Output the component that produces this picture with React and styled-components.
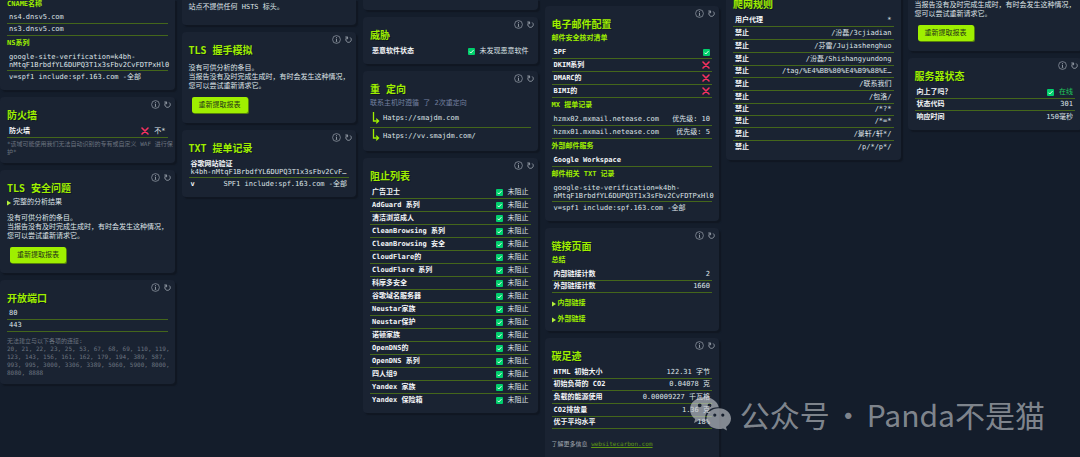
import React from "react";
import styled, { createGlobalStyle, css } from "styled-components";

const color = {
  page: "#141d2b",
  card: "#1a2332",
  shadow: "#101722",
  accent: "#9fef00",
  rule: "#44661b",
  text: "#dfe3e8",
  strong: "#f4f6f8",
  muted: "#6c7480",
  subtle: "#7480a0",
};

const GlobalStyle = createGlobalStyle`
  *, *::before, *::after { box-sizing: border-box; }
  body {
    margin: 0;
    background: ${color.page};
    color: ${color.text};
    font-family: "DejaVu Sans Mono", "Noto Sans CJK SC", monospace;
    font-size: 7px;
    line-height: 9px;
  }
  h2, h3, p, ul { margin: 0; padding: 0; }
  ul { list-style: none; }
`;

const Page = styled.main`
  position: relative;
  height: 100vh;
  overflow: hidden;
`;

const Board = styled.div`
  display: grid;
  grid-template-columns: repeat(6, minmax(0, 1fr));
  gap: 7px;
  align-items: start;
  margin-right: -2px;
`;

const Column = styled.div`
  display: flex;
  flex-direction: column;
  gap: 7px;
`;

const CardBox = styled.section`
  padding: 0 7px 7px;
  border-radius: 4px;
  background: ${color.card};
  box-shadow: 2px 2px 1px ${color.shadow};
  white-space: nowrap;
`;

const ScrolledCard = styled(CardBox)`
  margin-top: ${(p) => p.$shift || -1}px;
  padding: ${(p) => p.$pad || "0 7px 7px"};
  border-radius: 0 0 4px 4px;
`;

const Actions = styled.div`
  display: flex;
  justify-content: flex-end;
  gap: 3px;
  height: 11px;
  padding-top: 3px;
  margin-right: -4px;
`;

const IconButton = styled.button`
  display: flex;
  width: 9px;
  height: 9px;
  padding: 0;
  border: 0;
  background: none;
  color: #9aa1ac;
  cursor: pointer;
`;

const Title = styled.h2`
  height: 14px;
  font-size: 10px;
  font-weight: 700;
  line-height: 16px;
  color: ${color.accent};
  text-shadow: 1px 1px 0 ${color.shadow};
`;

const Subtitle = styled.h3`
  margin: 2px 0;
  font-size: 7px;
  font-weight: 700;
  line-height: 11px;
  color: ${color.accent};

  ${ScrolledCard} > &:first-child { margin-top: 0; }
`;

const List = styled.ul`
  ${Title} + & { margin-top: 3px; }
`;

const Row = styled.li`
  display: flex;
  justify-content: space-between;
  padding: 0 2px;
  line-height: ${(p) => (p.$tight ? "11px" : "12px")};
  border-bottom: 1px solid ${color.rule};

  ${List}:last-child > &:last-child {
    line-height: 12px;
    border-bottom: 0;
  }

  ${(p) =>
    p.$stacked &&
    css`
      flex-direction: column;
      padding: 2px 2px 1px;
      line-height: 8px;
    `}
`;

const Label = styled.span`
  font-weight: 700;
  color: ${color.strong};
`;

const Value = styled.span`
  display: flex;
  align-items: center;
  gap: 5px;
  color: ${(p) => (p.$online ? "#20c85c" : color.text)};
`;

const Paragraph = styled.p`
  margin-top: ${(p) => (p.$flush ? "0" : "7px")};
`;

const Hint = styled.p`
  margin: 2px 0 1px;
  line-height: 11px;
  color: ${color.subtle};
`;

const Note = styled.p`
  margin-top: ${(p) => p.$gap}px;
  font-size: 6px;
  line-height: 8px;
  color: ${color.muted};
`;

const Footnote = styled(Note)`
  margin-bottom: 7px;
  color: #a2a8b1;

  a { color: #5f9812; }
`;

const ReportButton = styled.button`
  display: block;
  width: 56px;
  height: 16px;
  margin: 6px 3px 3px;
  padding: 0;
  border: 0;
  border-radius: 2px;
  background: ${color.accent};
  box-shadow: 1px 1px 0 #56800c;
  color: #26351a;
  font: inherit;
  cursor: pointer;
`;

const Summary = styled.summary`
  display: flex;
  align-items: center;
  gap: 2px;
  list-style: none;
  cursor: pointer;
  color: ${(p) => (p.$accent ? color.accent : color.text)};
  font-weight: ${(p) => (p.$accent ? 700 : 400)};
`;

const Disclosure = styled.details`
  margin-top: 3px;
`;

const DisclosureGroup = styled.div`
  display: flex;
  flex-direction: column;
  gap: 7px;
  margin-top: 6px;

  ${Disclosure} { margin-top: 0; }
`;

const RedirectRow = styled.li`
  display: flex;
  align-items: center;
  gap: 3px;
  height: 17px;
  padding-left: 2px;

  & + & { border-top: 1px solid ${color.rule}; }
`;

const Watermark = styled.div`
  position: absolute;
  right: 35px;
  bottom: 21px;
  display: flex;
  align-items: center;
  color: rgba(200, 203, 208, 0.62);
  font-family: "Noto Sans CJK SC", sans-serif;
  font-size: 30px;
  line-height: 44px;
  white-space: nowrap;
`;

const WatermarkDot = styled.span`
  width: 37px;
  text-align: center;
`;

const WatermarkLogo = styled.svg`
  width: 44px;
  height: 36px;
  margin-right: 7px;
`;

function InfoIcon() {
  return (
    <svg width="9" height="9" viewBox="0 0 9 9" fill="none" stroke="currentColor">
      <circle cx="4.5" cy="4.5" r="3.9" strokeWidth="0.7" />
      <path d="M4.5 3.8v2.9" strokeWidth="0.9" />
      <path d="M3.700 3.900h.8M3.500 6.700h2" strokeWidth="0.4" />
      <circle cx="4.5" cy="2.4" r="0.5" fill="currentColor" stroke="none" />
    </svg>
  );
}

function RefreshIcon() {
  return (
    <svg width="9" height="9" viewBox="0 0 9 9" fill="none" stroke="currentColor">
      <path d="M3.400 2.200A2.700 2.700 0 1 0 6.200 2.500" strokeWidth="0.9" />
      <path d="M1.300 2h2.300v2.200" strokeWidth="0.9" />
    </svg>
  );
}

function CheckMark() {
  return (
    <svg width="7" height="7" viewBox="0 0 7 7" role="img" aria-label="是">
      <rect width="7" height="7" rx="1" fill="#00cf6c" />
      <path d="M1.5 3.7 2.8 5 5.5 2.1" fill="none" stroke="#fff" strokeWidth="0.9" />
    </svg>
  );
}

function CrossMark() {
  return (
    <svg width="8" height="8" viewBox="0 0 8 8" role="img" aria-label="否">
      <path d="M1 1 7 7M7 1 1 7" stroke="#f8315f" strokeWidth="1.6" strokeLinecap="round" />
    </svg>
  );
}

function Triangle() {
  return (
    <svg width="4" height="6" viewBox="0 0 4 6">
      <path d="M0 .5 4 3 0 5.5Z" fill="#b4f03c" />
    </svg>
  );
}

function HopArrow() {
  return (
    <svg width="8" height="14" viewBox="0 0 8 14" fill="none" stroke={color.accent}>
      <path d="M1.500 0v9h4.500M4.200 6.600 6.600 9 4.200 11.400" strokeWidth="1.3" />
    </svg>
  );
}

function Card({ title, children }) {
  return (
    <CardBox>
      <Actions>
        <IconButton aria-label="信息"><InfoIcon /></IconButton>
        <IconButton aria-label="刷新"><RefreshIcon /></IconButton>
      </Actions>
      <Title>{title}</Title>
      {children}
    </CardBox>
  );
}

function Pair({ label, children, tight, online }) {
  return (
    <Row $tight={tight}>
      <Label>{label}</Label>
      <Value $online={online}>{children}</Value>
    </Row>
  );
}

function RetryReport() {
  return (
    <>
      <Paragraph>
        没有可供分析的条目。<br />
        当报告没有及时完成生成时，有时会发生这种情况，<br />
        您可以尝试重新请求它。
      </Paragraph>
      <ReportButton>重新提取报表</ReportButton>
    </>
  );
}

function TxtRecords() {
  return (
    <List>
      <Row $stacked>
        <span>google-site-verification=k4bh-</span>
        <span>nMtqF1BrbdfYL6DUPQ3T1x3sFbv2CvFDTPxHl0</span>
      </Row>
      <Row>v=spf1 include:spf.163.com -全部</Row>
    </List>
  );
}

const blockLists = [
  "广告卫士", "AdGuard 系列", "清洁浏览成人", "CleanBrowsing 系列", "CleanBrowsing 安全",
  "CloudFlare的", "CloudFlare 系列", "科摩多安全", "谷歌域名服务器", "Neustar家族",
  "Neustar保护", "诺顿家族", "OpenDNS的", "OpenDNS 系列", "四人组9", "Yandex 家族", "Yandex 保险箱",
];

const crawlRules = [
  ["用户代理", "*"],
  ["禁止", "/汾磊/3cjiadian"],
  ["禁止", "/芬雷/Jujiashenghuo"],
  ["禁止", "/汾磊/Shishangyundong"],
  ["禁止", "/tag/%E4%BB%80%E4%B9%88%E…", true],
  ["禁止", "/联系我们"],
  ["禁止", "/包洛/"],
  ["禁止", "/*?*", true],
  ["禁止", "/*=*", true],
  ["禁止", "/景轩/轩*/"],
  ["禁止", "/p/*/p*/"],
];

export default function App() {
  return (
    <Page>
      <GlobalStyle />
      <Board>
        <Column>
          <ScrolledCard>
            <Subtitle>CNAME名称</Subtitle>
            <List>
              <Row $tight>ns4.dnsv5.com</Row>
              <Row $tight>ns3.dnsv5.com</Row>
            </List>
            <Subtitle>NS系列</Subtitle>
            <TxtRecords />
          </ScrolledCard>
          <Card title="防火墙">
            <List>
              <Pair label="防火墙"><CrossMark />不*</Pair>
            </List>
            <Note $gap={2}>
              *该域可能使用我们无法自动识别的专有或自定义 WAF 进行保<br />护*
            </Note>
          </Card>
          <Card title="TLS 安全问题">
            <Disclosure>
              <Summary><Triangle />完整的分析结果</Summary>
            </Disclosure>
            <RetryReport />
          </Card>
          <Card title="开放端口">
            <List>
              <Row $tight>80</Row>
              <Row $tight>443</Row>
            </List>
            <Note $gap={5}>
              无法建立与以下各项的连接:<br />
              20, 21, 22, 23, 25, 53, 67, 68, 69, 110, 119,<br />
              123, 143, 156, 161, 162, 179, 194, 389, 587,<br />
              993, 995, 3000, 3306, 3389, 5060, 5900, 8000,<br />
              8080, 8888
            </Note>
          </Card>
        </Column>

        <Column>
          <ScrolledCard $pad="4px 7px 13px">
            <Paragraph $flush>站点不提供任何 HSTS 标头。</Paragraph>
          </ScrolledCard>
          <Card title="TLS 握手模拟">
            <RetryReport />
          </Card>
          <Card title="TXT 提单记录">
            <List>
              <Row $stacked>
                <Label>谷歌网站验证</Label>
                <span>k4bh-nMtqF1BrbdfYL6DUPQ3T1x3sFbv2CvF…</span>
              </Row>
              <Pair label="v">SPF1 include:spf.163.com -全部</Pair>
            </List>
          </Card>
        </Column>

        <Column>
          <ScrolledCard $pad="4px 7px 7px" />
          <Card title="威胁">
            <List>
              <Pair label="恶意软件状态"><CheckMark />未发现恶意软件</Pair>
            </List>
          </Card>
          <Card title="重 定向">
            <Hint>联系主机时遵循 了 2次重定向</Hint>
            <ul>
              <RedirectRow><HopArrow />Hatps://smajdm.com</RedirectRow>
              <RedirectRow><HopArrow />Hatps://vv.smajdm.com/</RedirectRow>
            </ul>
          </Card>
          <Card title="阻止列表">
            <List>
              {blockLists.map((name) => (
                <Pair key={name} label={name}><CheckMark />未阻止</Pair>
              ))}
            </List>
          </Card>
        </Column>

        <Column>
          <ScrolledCard $pad="0" />
          <Card title="电子邮件配置">
            <Subtitle>邮件安全核对清单</Subtitle>
            <List>
              <Pair label="SPF"><CheckMark /></Pair>
              <Pair label="DKIM系列"><CrossMark /></Pair>
              <Pair label="DMARC的"><CrossMark /></Pair>
              <Pair label="BIMI的"><CrossMark /></Pair>
            </List>
            <Subtitle>MX 提单记录</Subtitle>
            <List>
              <Row><span>hzmx02.mxmail.netease.com</span><span>优先级: 10</span></Row>
              <Row><span>hzmx01.mxmail.netease.com</span><span>优先级: 5</span></Row>
            </List>
            <Subtitle>外部邮件服务</Subtitle>
            <List>
              <Row><Label>Google Workspace</Label></Row>
            </List>
            <Subtitle>邮件相关 TXT 记录</Subtitle>
            <TxtRecords />
          </Card>
          <Card title="链接页面">
            <Subtitle>总结</Subtitle>
            <List>
              <Pair label="内部链接计数">2</Pair>
              <Pair label="外部链接计数" tight>1660</Pair>
            </List>
            <DisclosureGroup>
              <Disclosure><Summary $accent><Triangle />内部链接</Summary></Disclosure>
              <Disclosure><Summary $accent><Triangle />外部链接</Summary></Disclosure>
            </DisclosureGroup>
          </Card>
          <Card title="碳足迹">
            <List>
              <Pair label="HTML 初始大小">122.31 字节</Pair>
              <Pair label="初始负荷的 CO2" tight>0.04078 克</Pair>
              <Pair label="负载的能源使用">0.00009227 千瓦格</Pair>
              <Pair label="CO2排放量">1.36 克</Pair>
              <Pair label="优于平均水平" tight>18%</Pair>
            </List>
            <Footnote $gap={11}>
              了解更多信息 <a href="https://websitecarbon.com">websitecarbon.com</a>
            </Footnote>
          </Card>
        </Column>

        <Column>
          <ScrolledCard $shift={-3}>
            <Title>爬网规则</Title>
            <List>
              {crawlRules.map(([label, value, tight]) => (
                <Pair key={label + value} label={label} tight={tight}>{value}</Pair>
              ))}
            </List>
          </ScrolledCard>
        </Column>

        <Column>
          <ScrolledCard $pad="2px 7px 7px">
            <Paragraph $flush>
              当报告没有及时完成生成时，有时会发生这种情况，<br />
              您可以尝试重新请求它。
            </Paragraph>
            <ReportButton>重新提取报表</ReportButton>
          </ScrolledCard>
          <Card title="服务器状态">
            <List>
              <Pair label="向上了吗？" online><CheckMark />在线</Pair>
              <Pair label="状态代码" tight>301</Pair>
              <Pair label="响应时间">150毫秒</Pair>
            </List>
          </Card>
        </Column>
      </Board>

      <Watermark>
        <WatermarkLogo viewBox="0 0 44 36" aria-hidden="true">
          <path
            fill="currentColor"
            fillRule="evenodd"
            d="M15.500 1C7 1 1 6.600 1 13.400c0 3.900 2 7.300 5.200 9.500L5 27l4.800-2.500c1.700.5 3.700.8 5.700.8h1.100c-.4-1.200-.5-2.300-.5-3.300 0-6.200 5.600-10.800 12.600-10.800h1.100C28.400 5.300 22.600 1 15.500 1ZM10.700 7.400a1.900 1.900 0 1 1 0 3.800 1.900 1.900 0 0 1 0-3.800Zm9.800 0a1.900 1.900 0 1 1 0 3.800 1.900 1.900 0 0 1 0-3.800Z"
          />
          <path
            fill="currentColor"
            fillRule="evenodd"
            d="M29.800 12.300c-7 0-12.300 4.600-12.300 10.300 0 5.800 5.300 10.400 12.300 10.400 1.500 0 3-.2 4.300-.6L38 34.600l-1-3.500c3-1.900 5-5 5-8.500 0-5.700-5.300-10.300-12.200-10.300Zm-4 5.200a1.600 1.600 0 1 1 0 3.200 1.600 1.600 0 0 1 0-3.200Zm8 0a1.600 1.600 0 1 1 0 3.200 1.600 1.600 0 0 1 0-3.200Z"
          />
        </WatermarkLogo>
        <span>公众号</span>
        <WatermarkDot>·</WatermarkDot>
        <span>Panda不是猫</span>
      </Watermark>
    </Page>
  );
}
